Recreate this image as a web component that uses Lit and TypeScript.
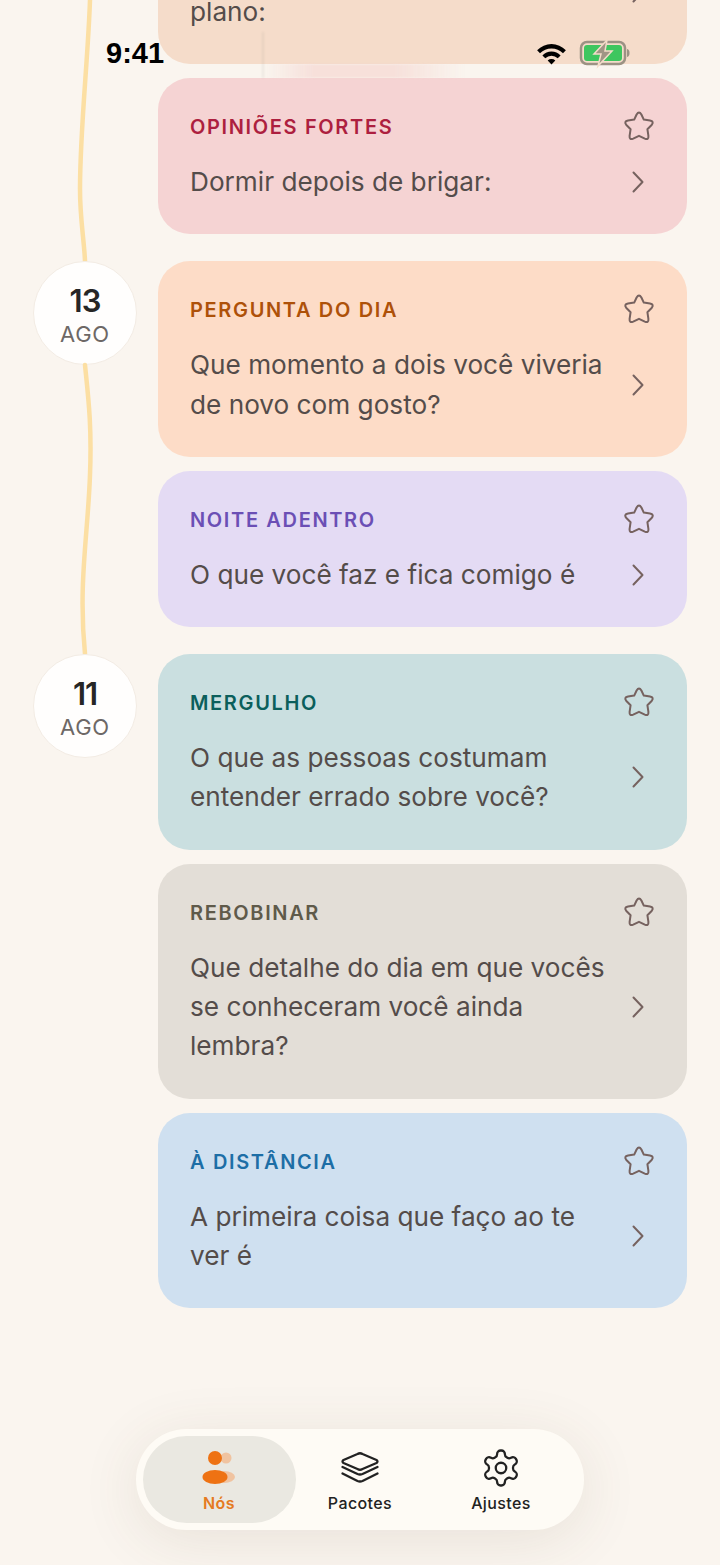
import { LitElement, html, css, svg } from "lit";
import { customElement } from "lit/decorators.js";

type Card = { label: string; text: string; bg: string; fg: string };
type Group = { day?: string; rail?: string; cards: Card[] };

const GROUPS: Group[] = [
  {
    rail: "M90 0 C 88 60, 80 130, 80 190 C 80 220, 84 240, 85 262",
    cards: [
      { label: "", text: "Um pedacinho do nosso<br>plano:", bg: "#f5dcca", fg: "#a0540f" },
      { label: "OPINIÕES FORTES", text: "Dormir depois de brigar:", bg: "#f5d3d3", fg: "#ad1f3f" },
    ],
  },
  {
    day: "13",
    rail: "M85 0 C 88 30, 92 60, 90 110 C 88 170, 78 220, 85 290",
    cards: [
      { label: "PERGUNTA DO DIA", text: "Que momento a dois você viveria<br>de novo com gosto?", bg: "#fddcc7", fg: "#ae5109" },
      { label: "NOITE ADENTRO", text: "O que você faz e fica comigo é", bg: "#e4dbf4", fg: "#6b4fb5" },
    ],
  },
  {
    day: "11",
    cards: [
      { label: "MERGULHO", text: "O que as pessoas costumam<br>entender errado sobre você?", bg: "#cadfe0", fg: "#0b5f5c" },
      { label: "REBOBINAR", text: "Que detalhe do dia em que vocês<br>se conheceram você ainda<br>lembra?", bg: "#e3ded7", fg: "#5f5a4a" },
      { label: "À DISTÂNCIA", text: "A primeira coisa que faço ao te<br>ver é", bg: "#cfe0f0", fg: "#1d6ea6" },
    ],
  },
];

@customElement("app-root")
export class AppRoot extends LitElement {
  static styles = css`
    :host {
      display: block;
      position: relative;
      height: 1565px;
      overflow: hidden;
      background: #faf5ef;
      font-family: "Inter", "Liberation Sans", sans-serif;
    }
    .list {
      display: flex;
      flex-direction: column;
      gap: 27px;
      margin-top: -131.6px;
      padding-right: 33px;
    }
    .group { display: flex; }
    .rail {
      width: 158px;
      flex: none;
      display: flex;
      flex-direction: column;
      align-items: flex-start;
    }
    .date {
      margin-left: 33px;
      width: 104px;
      height: 104px;
      flex: none;
      box-sizing: border-box;
      border-radius: 50%;
      background: #fffefd;
      border: 1px solid #f3ece4;
      padding-top: 5px;
      display: flex;
      flex-direction: column;
      align-items: center;
      justify-content: center;
    }
    .day { font-size: 31px; line-height: 36px; font-weight: 600; color: #262626; letter-spacing: -1px; }
    .mon { font-size: 22px; line-height: 28px; color: #6d6866; letter-spacing: 0.7px; margin-top: 1px; }
    .line { flex: 1 1 0; height: 0; min-height: 0; width: 158px; margin-bottom: -27px; overflow: visible; display: block; }
    .cards { flex: 1; display: flex; flex-direction: column; gap: 14px; min-width: 0; }
    .card {
      border-radius: 32px;
      padding: 32px 33px 33px 32px;
    }
    .head { display: flex; justify-content: space-between; align-items: center; height: 32px; }
    .label { font-size: 20px; font-weight: 600; letter-spacing: 1.65px; margin-top: 2px; }
    .body { display: flex; align-items: center; justify-content: space-between; margin-top: 20px; gap: 10px; }
    .text { font-size: 26.2px; line-height: 39.3px; color: #544c4a; }
    .star { width: 30px; height: 30px; flex: none; overflow: visible; }
    .chev { width: 10px; height: 20px; margin-right: 11px; flex: none; overflow: visible; }
    .status {
      position: absolute; top: 41px; left: 106px; right: 90px; height: 24px;
      display: flex; align-items: center; justify-content: space-between;
      pointer-events: none;
    }
    .time { font: 600 29px/24px "Liberation Sans", sans-serif; color: #000; }
    .icons { display: flex; gap: 13px; align-items: center; }
    .ghost {
      position: absolute; left: 262px; top: 32px; width: 200px; height: 46px;
      border-left: 2px solid rgba(150,140,130,0.14);
      filter: blur(1px);
    }
    .ghost::after {
      content: "";
      position: absolute; left: 0; right: 0; top: 32px; height: 14px;
      background: rgba(245,215,210,0.7);
      -webkit-mask-image: linear-gradient(to right, transparent, #000 25%, #000 65%, transparent);
      mask-image: linear-gradient(to right, transparent, #000 25%, #000 65%, transparent);
    }
    .tabs {
      position: absolute; left: 136px; top: 1429px; width: 448px; height: 101px;
      box-sizing: border-box; padding: 7px;
      border-radius: 51px;
      background: #fefbf5;
      box-shadow: 0 10px 60px rgba(90,70,50,0.11);
      display: flex; justify-content: center; align-items: stretch;
    }
    .tab {
      display: flex; flex-direction: column; align-items: center; justify-content: flex-start;
      padding-top: 13px; gap: 6px; border-radius: 44px;
      font: 500 16px/20px "Inter", sans-serif; letter-spacing: 0.4px; color: #222;
      width: 141px;
    }
    .tab svg { width: 44px; height: 38px; display: block; overflow: visible; }
    .tab.on { background: #eae8e1; width: 153px; margin: 0 -6px; color: #e57a22; font-weight: 600; }
  `;

  star() {
    return html`<svg class="star" viewBox="0 0 30 30" fill="none" stroke="#76625f" stroke-width="2" stroke-linejoin="round">
      <path d="M12.6 3.5 Q15 -0.5 17.4 3.5 L19.8 8.6 L26 9.6 Q30.5 10.6 27.6 14 L23.4 18.2 L24.4 24.8 Q24.8 29.4 20.8 27.6 L15 24.8 L9.2 27.6 Q5.2 29.4 5.6 24.8 L6.6 18.2 L2.4 14 Q-0.5 10.6 4 9.6 L10.2 8.6 Z"/>
    </svg>`;
  }
  chev() {
    return html`<svg class="chev" viewBox="0 0 10 20" fill="none" stroke="#76625f" stroke-width="2" stroke-linecap="round" stroke-linejoin="round"><path d="M0.5 0.5 L9.5 10 L0.5 19.5"/></svg>`;
  }

  card(c: Card) {
    return html`<div class="card" style="background:${c.bg}">
      <div class="head"><span class="label" style="color:${c.fg}">${c.label}</span>${this.star()}</div>
      <div class="body"><div class="text" .innerHTML=${c.text}></div>${this.chev()}</div>
    </div>`;
  }

  render() {
    return html`
      <div class="list">
        ${GROUPS.map(
          (g, i) => html`<div class="group">
            <div class="rail">
              ${g.day ? html`<div class="date"><span class="day">${g.day}</span><span class="mon">AGO</span></div>` : ""}
              ${g.rail
                ? html`<svg class="line" style=${i === 0 ? "margin-top:132px" : ""} viewBox="0 0 158 ${i === 0 ? 262 : 290}" preserveAspectRatio="none" fill="none">
                    ${svg`<path d=${g.rail} stroke="#fcdfa3" stroke-width="4.5" stroke-linecap="round"/>`}
                  </svg>`
                : ""}
            </div>
            <div class="cards">${g.cards.map((c) => this.card(c))}</div>
          </div>`
        )}
      </div>
      <div class="ghost"></div>
      <div class="status">
        <span class="time">9:41</span>
        <span class="icons">
          <svg width="31" height="23" viewBox="0 0 32 24">
            <path d="M1 8.5 A21 21 0 0 1 31 8.5 L28 11.8 A17 17 0 0 0 4 11.8 Z M6.5 14 A13 13 0 0 1 25.5 14 L22.5 17 A9 9 0 0 0 9.5 17 Z M12 19.3 A6 6 0 0 1 20 19.3 L16 23.5 Z" fill="#000"/>
          </svg>
          <svg width="50" height="24" viewBox="0 0 50 24" overflow="visible">
            <rect x="1" y="1" width="44" height="22" rx="6" fill="none" stroke="#9c9284" stroke-width="2.5"/>
            <rect x="4" y="4" width="38" height="16" rx="3" fill="#3ec65f"/>
            <path d="M47 8 C49 8.5 49.5 10 49.5 12 C49.5 14 49 15.5 47 16 Z" fill="#9c9284"/>
            <path d="M27 -1 L14 13 L21 13 L18 25 L32 10 L25 10 Z" fill="#a09585" stroke="#f3dcc9" stroke-width="1.5"/>
          </svg>
        </span>
      </div>
      <div class="tabs">
        <div class="tab on">
          <svg viewBox="0 0 44 38">
            <circle cx="29" cy="9" r="5.5" fill="#f0c3a0"/>
            <ellipse cx="27" cy="28" rx="11" ry="6" fill="#f0c3a0"/>
            <circle cx="18" cy="9" r="7" fill="#ee7213"/>
            <ellipse cx="18" cy="28" rx="12.5" ry="7" fill="#ee7213"/>
          </svg>
          <span>Nós</span>
        </div>
        <div class="tab">
          <svg viewBox="0 0 44 38" fill="none" stroke="#222" stroke-width="2.3" stroke-linejoin="round" stroke-linecap="round">
            <path d="M19.5 5 Q22 3.5 24.5 5 L38.5 11 Q40.5 12.5 38.5 14 L24.5 20 Q22 21.5 19.5 20 L5.5 14 Q3.5 12.5 5.5 11 Z"/>
            <path d="M4.5 18 L19.5 25 Q22 26 24.5 25 L39.5 18"/>
            <path d="M4.5 24.5 L19.5 32 Q22 33 24.5 32 L39.5 24.5"/>
          </svg>
          <span>Pacotes</span>
        </div>
        <div class="tab">
          <svg viewBox="0 0 44 38">
            <g transform="translate(1 -2) scale(1.75)" fill="none" stroke="#222" stroke-width="1.3" stroke-linecap="round" stroke-linejoin="round">
              <path d="M12.22 2h-.44a2 2 0 0 0-2 2v.18a2 2 0 0 1-1 1.73l-.43.25a2 2 0 0 1-2 0l-.15-.08a2 2 0 0 0-2.73.73l-.22.38a2 2 0 0 0 .73 2.73l.15.1a2 2 0 0 1 1 1.72v.51a2 2 0 0 1-1 1.74l-.15.09a2 2 0 0 0-.73 2.73l.22.38a2 2 0 0 0 2.73.73l.15-.08a2 2 0 0 1 2 0l.43.25a2 2 0 0 1 1 1.73V20a2 2 0 0 0 2 2h.44a2 2 0 0 0 2-2v-.18a2 2 0 0 1 1-1.73l.43-.25a2 2 0 0 1 2 0l.15.08a2 2 0 0 0 2.73-.73l.22-.39a2 2 0 0 0-.73-2.73l-.15-.08a2 2 0 0 1-1-1.74v-.5a2 2 0 0 1 1-1.74l.15-.09a2 2 0 0 0 .73-2.73l-.22-.38a2 2 0 0 0-2.73-.73l-.15.08a2 2 0 0 1-2 0l-.43-.25a2 2 0 0 1-1-1.73V4a2 2 0 0 0-2-2z"/>
              <circle cx="12" cy="12" r="3"/>
            </g>
          </svg>
          <span>Ajustes</span>
        </div>
      </div>
    `;
  }
}
